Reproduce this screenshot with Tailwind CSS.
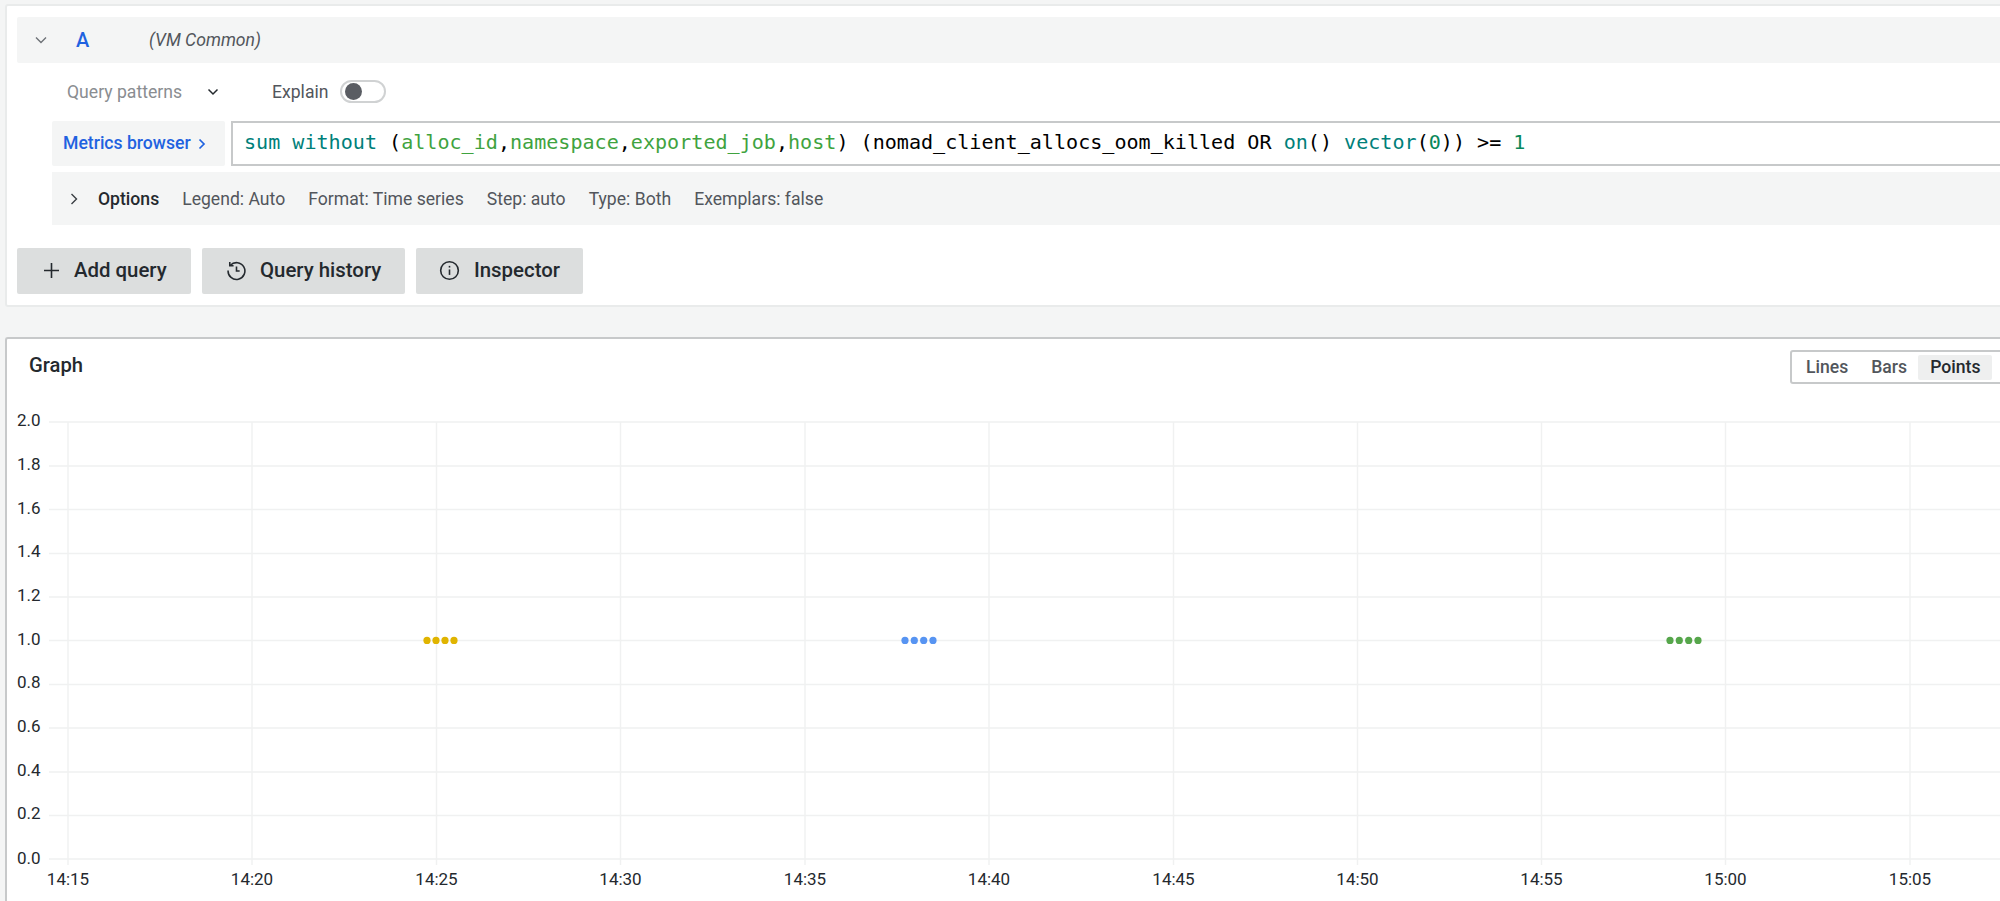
<!DOCTYPE html>
<html lang="en">
<head>
    <meta charset="UTF-8">
    <title>Explore - Grafana</title>
    <script src="https://cdn.jsdelivr.net/npm/@tailwindcss/browser@4"></script>
</head>
<body class="bg-[#f4f5f5] h-[901px] overflow-hidden font-['Roboto',sans-serif] text-[#24292e]">

    <!-- query panel -->
    <section class="ml-[5px] mt-[4px] w-[2020px] h-[303px] bg-white border-2 border-[#e9ebeb] rounded-[3px] pt-[11px] pl-[10px]">
        <div class="h-[46px] bg-[#f4f5f5] rounded-[2px] flex items-center">
            <svg class="ml-[17px] w-[14px] h-[14px] text-[#6e7277]" viewBox="0 0 14 14" fill="none" stroke="currentColor" stroke-width="1.4"><path d="M2 4.5l5 5 5-5"/></svg>
            <span class="ml-[28px] w-[73px] text-[20px] font-medium text-[#1f62e0]">A</span>
            <span class="text-[17.6px] italic text-[#52565c]">(VM Common)</span>
        </div>

        <div class="h-[58px] flex items-center pl-[50px]">
            <span class="text-[17.6px] text-[#8a8d91]">Query patterns</span>
            <svg class="ml-[24px] w-[14px] h-[14px] text-[#24292e]" viewBox="0 0 14 14" fill="none" stroke="currentColor" stroke-width="1.5"><path d="M2.5 4.5l4.5 4.5 4.5-4.5"/></svg>
            <span class="ml-[52px] text-[17.6px] text-[#52565c]">Explain</span>
            <span class="ml-[12px] mb-[2px] w-[46px] h-[23px] rounded-full border-2 border-[#d0d2d3] bg-white flex items-center pl-[3px]">
                <span class="w-[17px] h-[17px] rounded-full bg-[#5a5d63]"></span>
            </span>
        </div>

        <div class="ml-[35px] flex h-[45px]">
            <div class="w-[173px] bg-[#f4f5f5] rounded-[2px] flex items-center pl-[11px] text-[#1f62e0] text-[17.6px] font-medium">
                Metrics browser
                <svg class="ml-[5px] w-[12px] h-[14px]" viewBox="0 0 12 14" fill="none" stroke="currentColor" stroke-width="1.7"><path d="M3.5 2.5l4.5 4.5-4.5 4.5"/></svg>
            </div>
            <div class="ml-[6px] flex-1 bg-white border-2 border-[#c7c9ca] flex items-center pl-[11px] pb-[3px] text-[20.08px] whitespace-pre text-black font-['DejaVu_Sans_Mono',monospace]"><span class="text-[#00807a]">sum without</span> (<span class="text-[#3fa33f]">alloc_id</span>,<span class="text-[#3fa33f]">namespace</span>,<span class="text-[#3fa33f]">exported_job</span>,<span class="text-[#3fa33f]">host</span>) (nomad_client_allocs_oom_killed OR <span class="text-[#00807a]">on</span>() <span class="text-[#00807a]">vector</span>(<span class="text-[#09885a]">0</span>)) &gt;= <span class="text-[#09885a]">1</span></div>
        </div>

        <div class="ml-[35px] mt-[6px] h-[53px] pt-[1px] bg-[#f4f5f5] flex items-center text-[17.6px] text-[#52565c]">
            <svg class="ml-[15px] w-[14px] h-[14px] text-[#3a3e43]" viewBox="0 0 14 14" fill="none" stroke="currentColor" stroke-width="1.4"><path d="M4.5 2l5 5-5 5"/></svg>
            <span class="ml-[17px] font-medium text-[#24292e]">Options</span>
            <span class="ml-[23px]">Legend: Auto</span>
            <span class="ml-[23px]">Format: Time series</span>
            <span class="ml-[23px]">Step: auto</span>
            <span class="ml-[23px]">Type: Both</span>
            <span class="ml-[23px]">Exemplars: false</span>
        </div>

        <div class="mt-[23px] flex gap-[11px] text-[20.4px] font-medium">
            <button class="w-[174px] h-[46px] bg-[#dcdede] rounded-[2px] flex items-center pl-[26px] pb-[1px]">
                <svg class="w-[17px] h-[17px] mr-[14px]" viewBox="0 0 17 17" fill="none" stroke="currentColor" stroke-width="1.6"><path d="M8.5 1v15M1 8.5h15"/></svg>
                Add query
            </button>
            <button class="w-[203px] h-[46px] bg-[#dcdede] rounded-[2px] flex items-center pl-[24px] pb-[1px]">
                <svg class="w-[21px] h-[21px] mr-[13px]" viewBox="0 0 20 20" fill="none" stroke="currentColor" stroke-width="1.5"><path d="M4.2 5A8 8 0 1 1 2 10"/><path d="M3.6 1.8V5.4H7.2"/><path d="M10 6.2V10.5H13"/></svg>
                Query history
            </button>
            <button class="w-[167px] h-[46px] bg-[#dcdede] rounded-[2px] flex items-center pl-[23px] pb-[1px]">
                <svg class="w-[21px] h-[21px] mr-[14px]" viewBox="0 0 20 20" fill="none" stroke="currentColor" stroke-width="1.5"><circle cx="10" cy="10" r="8.4"/><path d="M10 9v5.2"/><path d="M10 5.6v1.6"/></svg>
                Inspector
            </button>
        </div>
    </section>

    <!-- graph panel -->
    <section class="ml-[5px] mt-[30px] w-[2020px] h-[600px] bg-white border-t-2 border-l-2 border-[#c7c9ca] rounded-tl-[3px]">
        <div class="h-[61px] relative">
            <h2 class="absolute left-[22px] top-[14px] text-[20.2px] font-medium leading-[24px]">Graph</h2>
            <div class="absolute left-[1783px] top-[11px] w-[240px] h-[34px] border-2 border-[#c7c9ca] rounded-[3px] flex items-center pl-[14px] text-[17.6px] font-medium text-[#52565c]">
                <span>Lines</span>
                <span class="ml-[23px]">Bars</span>
                <span class="ml-[11px] w-[74px] h-[25px] bg-[#eeefef] rounded-[2px] text-[#24292e] flex items-center pl-[12px]">Points</span>
            </div>
        </div>
        <svg class="block" width="2013" height="501" viewBox="7 400 2013 501" font-size="17" fill="#24292e" font-family="Roboto, sans-serif">
            <g stroke="#f0f1f1" stroke-width="1.4">
                <path d="M49 422H2020M49 466H2020M49 509.5H2020M49 553.5H2020M49 597H2020M49 640.5H2020M49 684.5H2020M49 728H2020M49 772H2020M49 815.5H2020M49 859H2020"/>
                <path d="M68 422V865M252 422V865M436.5 422V865M620.5 422V865M805 422V865M989 422V865M1173.5 422V865M1357.5 422V865M1541.5 422V865M1725.5 422V865M1910 422V865"/>
            </g>
            <g>
                <text x="17" y="425.5">2.0</text>
                <text x="17" y="469.5">1.8</text>
                <text x="17" y="513.5">1.6</text>
                <text x="17" y="557">1.4</text>
                <text x="17" y="601">1.2</text>
                <text x="17" y="644.5">1.0</text>
                <text x="17" y="688">0.8</text>
                <text x="17" y="732">0.6</text>
                <text x="17" y="776">0.4</text>
                <text x="17" y="819">0.2</text>
                <text x="17" y="863.5">0.0</text>
            </g>
            <g text-anchor="middle">
                <text x="68" y="885">14:15</text>
                <text x="252" y="885">14:20</text>
                <text x="436.5" y="885">14:25</text>
                <text x="620.5" y="885">14:30</text>
                <text x="805" y="885">14:35</text>
                <text x="989" y="885">14:40</text>
                <text x="1173.5" y="885">14:45</text>
                <text x="1357.5" y="885">14:50</text>
                <text x="1541.5" y="885">14:55</text>
                <text x="1725.5" y="885">15:00</text>
                <text x="1910" y="885">15:05</text>
            </g>
            <g fill="#e0b400">
                <circle cx="427" cy="640.4" r="3.6"/><circle cx="436" cy="640.4" r="3.6"/><circle cx="445" cy="640.4" r="3.6"/><circle cx="454" cy="640.4" r="3.6"/>
            </g>
            <g fill="#5794f2">
                <circle cx="905" cy="640.4" r="3.6"/><circle cx="914.3" cy="640.4" r="3.6"/><circle cx="923.7" cy="640.4" r="3.6"/><circle cx="933" cy="640.4" r="3.6"/>
            </g>
            <g fill="#56a64b">
                <circle cx="1670" cy="640.4" r="3.6"/><circle cx="1679.3" cy="640.4" r="3.6"/><circle cx="1688.7" cy="640.4" r="3.6"/><circle cx="1698" cy="640.4" r="3.6"/>
            </g>
        </svg>
    </section>

</body>
</html>
